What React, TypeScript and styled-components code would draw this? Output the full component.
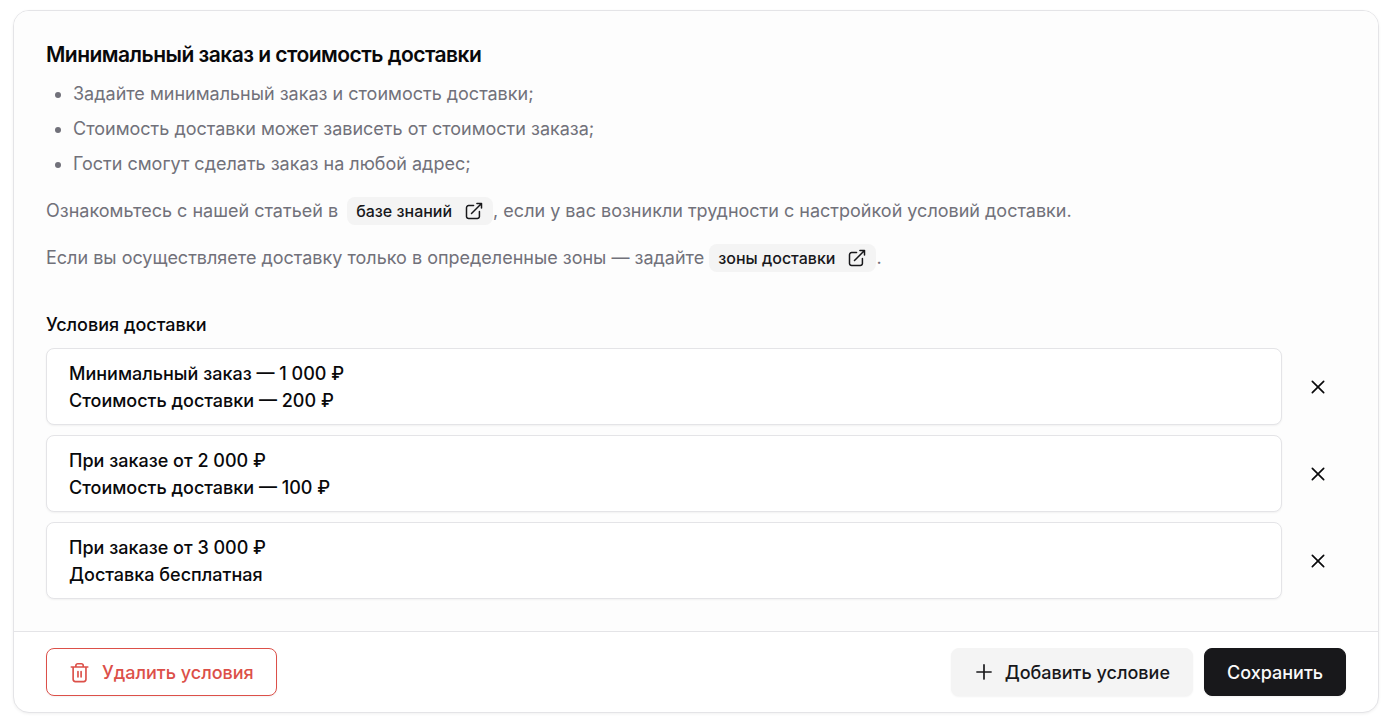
import React from 'react';
import styled, { createGlobalStyle } from 'styled-components';

const GlobalStyle = createGlobalStyle`
  *, *::before, *::after { box-sizing: border-box; }
  body {
    margin: 0;
    background: #fff;
    color: #09090b;
    font-family: Inter, sans-serif;
    font-size: 18px;
    line-height: 27px;
  }
`;

const Page = styled.main`
  padding: 10px 15px 10px 13px;
`;

const Card = styled.form`
  border: 1px solid #e4e4e7;
  border-radius: 16px;
  background: #fff;
  box-shadow: 0 1px 3px rgba(0, 0, 0, 0.06);
  overflow: hidden;
`;

const Body = styled.div`
  padding: 30px 32px 32px;
  background: #fdfdfd;
`;

const Title = styled.h2`
  margin: 0;
  font-size: 21px;
  line-height: 28px;
  font-weight: 600;
  letter-spacing: -0.025em;
`;

const Intro = styled.div`
  color: #71717a;
`;

const Hints = styled.ul`
  margin: 11px 0 20px;
  padding-left: 27px;
  display: grid;
  gap: 8px;
`;

const Paragraph = styled.p`
  margin: 19px 0 0;
`;

const BadgeLink = styled.a<{ $spaced?: boolean }>`
  display: inline-flex;
  align-items: center;
  gap: 12px;
  height: 28px;
  margin-left: ${({ $spaced }) => ($spaced ? '4px' : '0')};
  padding: 0 9px;
  border-radius: 8px;
  background: #f4f4f4;
  color: #18181b;
  font-size: 16px;
  line-height: 24px;
  font-weight: 500;
  text-decoration: none;
`;

const Subtitle = styled.h3`
  margin: 39px 0 10px;
  font-size: 18px;
  line-height: 27px;
  font-weight: 500;
`;

const Conditions = styled.ul`
  margin: 0;
  padding: 0;
  list-style: none;
  display: grid;
  gap: 10px;
`;

const Condition = styled.li`
  display: flex;
  align-items: center;
  gap: 8px;
`;

const ConditionText = styled.button`
  flex: 1;
  padding: 11px 22px 10px;
  border: 1px solid #e4e4e7;
  border-radius: 8px;
  background: #fff;
  box-shadow: 0 1px 2px rgba(0, 0, 0, 0.05);
  color: inherit;
  font: inherit;
  font-weight: 500;
  text-align: left;
`;

const Line = styled.span`
  display: block;
`;

const IconButton = styled.button`
  display: inline-flex;
  align-items: center;
  justify-content: center;
  width: 56px;
  height: 48px;
  padding: 0;
  border: 0;
  background: transparent;
  color: #09090b;
`;

const Footer = styled.footer`
  display: flex;
  gap: 11px;
  padding: 16px 32px;
  border-top: 1px solid #e4e4e7;
`;

const variants = {
  danger: 'background: #fff; border-color: #dc5049; color: #dc5049; margin-right: auto;',
  secondary: 'background: #f4f4f4; border-color: #f4f4f4; color: #18181b;',
  primary: 'background: #18181b; border-color: #18181b; color: #fafafa;',
};

const Button = styled.button<{ $variant: keyof typeof variants }>`
  display: inline-flex;
  align-items: center;
  gap: 11px;
  height: 48px;
  padding: 0 22px;
  border: 1px solid;
  border-radius: 8px;
  box-shadow: 0 1px 2px rgba(0, 0, 0, 0.05);
  font: inherit;
  font-weight: 500;
  ${({ $variant }) => variants[$variant]}
`;

const Icon = ({ size, d, width = 1.8 }: { size: number; d: string; width?: number }) => (
  <svg width={size} height={size} viewBox="0 0 24 24" fill="none" stroke="currentColor"
    strokeWidth={width} strokeLinecap="round" strokeLinejoin="round" aria-hidden="true">
    <path d={d} />
  </svg>
);

const OPEN = 'M11.5 5.5H5.5A2.5 2.5 0 0 0 3 8v10.5A2.5 2.5 0 0 0 5.5 21H16a2.5 2.5 0 0 0 2.5-2.5v-6M15.5 3H21v5.5M9 15 21 3';
const TRASH = 'M2.5 6.5h18M18.5 6.5v13.5a2.5 2.5 0 0 1-2.5 2.5H7a2.5 2.5 0 0 1-2.5-2.5V6.5M7.5 6.5V5a2 2 0 0 1 2-2h4a2 2 0 0 1 2 2v1.5M9.8 11.5v6M13.2 11.5v6';
const PLUS = 'M12 3.5v17M3.5 12h17';
const CROSS = 'M5.2 5.2l13.6 13.6M18.8 5.2 5.2 18.8';

const conditions = [
  ['Минимальный заказ — 1 000 ₽', 'Стоимость доставки — 200 ₽'],
  ['При заказе от 2 000 ₽', 'Стоимость доставки — 100 ₽'],
  ['При заказе от 3 000 ₽', 'Доставка бесплатная'],
];

export default function App() {
  return (
    <Page>
      <GlobalStyle />
      <Card>
        <Body>
          <Title>Минимальный заказ и стоимость доставки</Title>
          <Intro>
            <Hints>
              <li>Задайте минимальный заказ и стоимость доставки;</li>
              <li>Стоимость доставки может зависеть от стоимости заказа;</li>
              <li>Гости смогут сделать заказ на любой адрес;</li>
            </Hints>
            <Paragraph>
              Ознакомьтесь с нашей статьей в{' '}
              <BadgeLink href="#help" $spaced>базе знаний<Icon size={20} d={OPEN} /></BadgeLink>
              , если у вас возникли трудности с настройкой условий доставки.
            </Paragraph>
            <Paragraph>
              Если вы осуществляете доставку только в определенные зоны — задайте{' '}
              <BadgeLink href="#zones">зоны доставки<Icon size={20} d={OPEN} /></BadgeLink>.
            </Paragraph>
          </Intro>
          <Subtitle>Условия доставки</Subtitle>
          <Conditions>
            {conditions.map(([first, second]) => (
              <Condition key={first}>
                <ConditionText type="button">
                  <Line>{first}</Line>
                  <Line>{second}</Line>
                </ConditionText>
                <IconButton type="button" aria-label="Удалить условие">
                  <Icon size={20} d={CROSS} width={2} />
                </IconButton>
              </Condition>
            ))}
          </Conditions>
        </Body>
        <Footer>
          <Button type="button" $variant="danger"><Icon size={22} d={TRASH} />Удалить условия</Button>
          <Button type="button" $variant="secondary"><Icon size={20} d={PLUS} width={2} />Добавить условие</Button>
          <Button type="submit" $variant="primary">Сохранить</Button>
        </Footer>
      </Card>
    </Page>
  );
}
